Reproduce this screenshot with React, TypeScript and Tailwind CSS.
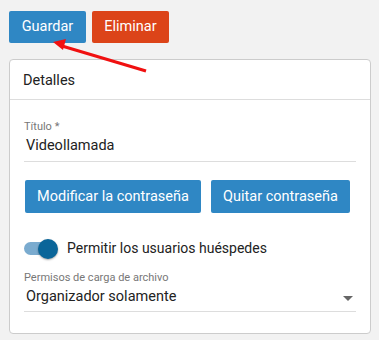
import React from "react";

export default function App() {
  return (
    <div className="relative w-[379px] h-[340px] bg-[#f2f2f2] overflow-hidden" style={{ fontFamily: "Roboto, 'Liberation Sans', sans-serif" }}>
      <div className="flex gap-[6px] pl-[9px] pt-[11px]">
        <button className="h-[32px] w-[77px] rounded-[2px] bg-[#2f87c4] text-white text-[14.5px]">Guardar</button>
        <button className="h-[32px] w-[77px] rounded-[2px] bg-[#dc4419] text-white text-[14.5px]">Eliminar</button>
      </div>
      <div className="ml-[9px] mt-[16px] w-[362px] h-[275px] rounded-[4px] border border-[#cccccc] bg-white">
        <div className="h-[40px] border-b border-[#dddddd] flex items-center pl-[13px] pt-[3px] text-[14.5px] text-[#222]">Detalles</div>
        <div className="px-[14px] pt-[20px]">
          <div className="text-[11px] text-[#777] leading-[13px]">Título *</div>
          <div className="text-[14.5px] text-[#222] pl-[2px] leading-[20px] mt-[3px] pb-[5px] border-b border-[#dddddd]">Videollamada</div>
          <div className="flex gap-[10px] mt-[18px] pl-[1px]">
            <button className="h-[33px] w-[176px] rounded-[2px] bg-[#2f87c4] text-white text-[14.5px]">Modificar la contraseña</button>
            <button className="h-[33px] w-[139px] rounded-[2px] bg-[#2f87c4] text-white text-[14.5px]">Quitar contraseña</button>
          </div>
          <div className="flex items-center mt-[25px]">
            <div className="relative w-[36px] h-[20px] flex items-center">
              <div className="w-[30px] h-[13px] rounded-full bg-[#7aabcf]" />
              <div className="absolute left-[14px] top-0 w-[20px] h-[20px] rounded-full bg-[#0a6599] shadow-[0_1px_2px_rgba(0,0,0,0.35)]" />
            </div>
            <div className="ml-[7px] text-[14px] text-[#222]">Permitir los usuarios huéspedes</div>
          </div>
          <div className="mt-[12px] text-[11px] text-[#777] leading-[13px]">Permisos de carga de archivo</div>
          <div className="relative text-[14.5px] text-[#222] pl-[2px] leading-[20px] mt-[3px] pb-[4px] border-b border-[#dddddd]">
            Organizador solamente
            <div className="absolute right-[3px] top-[9px] w-0 h-0 border-l-[5px] border-r-[5px] border-t-[5px] border-l-transparent border-r-transparent border-t-[#666]" />
          </div>
        </div>
      </div>
      <svg className="absolute left-0 top-0" width="379" height="340">
        <line x1="62" y1="46" x2="146" y2="71" stroke="#f01010" strokeWidth="3" />
        <polygon points="53,42 66,39 63,50" fill="#f01010" />
      </svg>
    </div>
  );
}
